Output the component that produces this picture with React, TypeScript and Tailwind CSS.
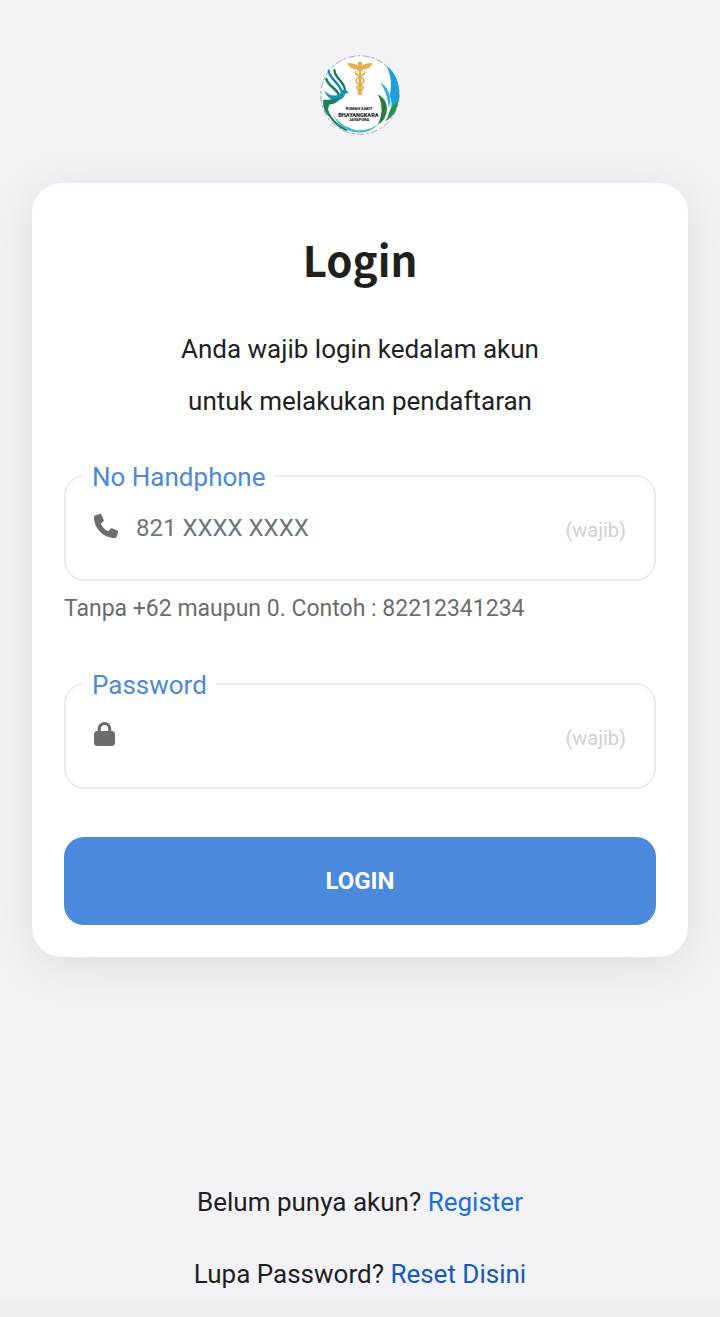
import type { ReactNode } from "react";
import { FaLock, FaPhone } from "react-icons/fa6";

function Logo() {
  return (
    <svg viewBox="0 0 100 100" className="size-20" role="img" aria-label="Rumah Sakit Bhayangkara Jayapura">
      <circle cx="50" cy="50" r="49" fill="#fff" stroke="#8b9194" strokeWidth="1" strokeDasharray="9 2 4 3" />

      {/* bottom ring */}
      <path d="M8 62c3 14 13 26 27 31l-2 2C18 89 8 77 8 62z" fill="#15824f" />
      <path d="M17 76c8 10 19 17 32 18 10 0 18-3 24-8-6 8-14 11-24 11-14 0-26-8-32-21z" fill="#4cb8cf" />

      {/* bird */}
      <g fill="none" strokeLinecap="round">
        <path d="M11 20c0 9 14 15 16 26" stroke="#1788b5" strokeWidth="3" />
        <path d="M18 19c0 9 12 14 13 24" stroke="#14805a" strokeWidth="3" />
        <path d="M8 30c1 8 12 11 15 19" stroke="#0f7f6b" strokeWidth="3" />
      </g>
      <path d="M5 44c7 8 17 9 22 2 2-4 6-4 9 2-4-1-5 1-6 4-5 8-19 7-25-8z" fill="#1d91b7" />
      <path d="M4 56c8 0 14-1 21-3-2 6-7 8-13 9-3 5-2 11 1 17C6 72 3 65 4 56z" fill="#14875a" />

      {/* leaves */}
      <path d="M83 13c12 9 17 24 16 39-1 9-5 14-11 19 2-8 2-14-1-20 3-13 2-26-4-38z" fill="#1c9fdb" />
      <path d="M75 34c9 5 13 14 13 25l-2 8c-1-12-4-23-11-33z" fill="#3aaee0" />
      <path d="M98 56c-3 6-9 8-11 14-2 6-2 9-6 13 10-4 16-15 17-27z" fill="#27924f" />
      <path d="M72 49c11 5 15 17 9 29-2 4-5 7-9 9 5-9 8-24 0-38z" fill="#2a7d3c" />

      {/* caduceus */}
      <g fill="#e5ad4c">
        <path d="M34 10c6 0 11 1 15 4h2c4-3 9-4 15-4-2 5-7 8-12 8l-3 3h-2l-3-3c-5 0-10-3-12-8z" />
        <circle cx="50" cy="11" r="3" />
        <path d="M49 12h2l1 37-2 2-2-2z" />
      </g>
      <path
        d="M45 20c-4 5 10 7 10 12s-9 5-9 9 7 4 6 8M55 20c4 5-10 7-10 12s9 5 9 9-7 4-6 8"
        fill="none"
        stroke="#e5ad4c"
        strokeWidth="2"
      />

      <g fill="#222" textAnchor="middle" fontFamily="Roboto, sans-serif" fontWeight="900">
        <text x="49" y="69" fontSize="5">RUMAH SAKIT</text>
        <text x="48" y="77" fontSize="7">BHAYANGKARA</text>
        <text x="49" y="83" fontSize="5">JAYAPURA</text>
      </g>
    </svg>
  );
}

type FieldProps = {
  id: string;
  label: string;
  type: string;
  placeholder?: string;
  icon: ReactNode;
};

function Field({ id, label, type, placeholder, icon }: FieldProps) {
  return (
    <div className="relative flex items-center h-[106px] px-7 rounded-[20px] border-2 border-[#ebebeb]">
      <label
        htmlFor={id}
        className="absolute -top-[18px] left-4 px-2.5 bg-white text-[26px] leading-9 text-[#4a89dc]"
      >
        {label}
      </label>
      <div className="text-[#6c6c6c] mr-[18px] mb-1">{icon}</div>
      <input
        id={id}
        type={type}
        placeholder={placeholder}
        required
        className="flex-1 min-w-0 h-full text-2xl text-[#6c757d] placeholder:text-[#6c757d] outline-none"
      />
      <em className="mt-1 not-italic text-xl text-[#d0d0d0]">(wajib)</em>
    </div>
  );
}

export default function App() {
  return (
    <div className="min-h-screen flex flex-col bg-[#f2f2f7] font-[Roboto,sans-serif] text-[#1f1f1f]">
      <div className="flex justify-center pt-[55px] pb-12">
        <Logo />
      </div>

      <div className="mx-8 px-8 pt-11 pb-8 rounded-[30px] bg-white shadow-[0_8px_48px_rgba(0,0,0,0.09)]">
        <h1 className="text-center text-[42px] leading-[64px] font-bold font-['Noto_Sans_CJK_SC',sans-serif]">
          Login
        </h1>
        <p className="mt-8 text-center text-[26px] leading-[52px]">
          Anda wajib login kedalam akun
          <br />
          untuk melakukan pendaftaran
        </p>

        <form className="mt-12" onSubmit={(e) => e.preventDefault()}>
          <Field
            id="phone"
            label="No Handphone"
            type="tel"
            placeholder="821 XXXX XXXX"
            icon={<FaPhone className="size-6" />}
          />
          <p className="mt-2 mb-[54px] text-[23px] leading-10 text-[#6c6c6c]">
            Tanpa +62 maupun 0. Contoh : 82212341234
          </p>
          <Field id="password" label="Password" type="password" icon={<FaLock className="h-6 w-[21px]" />} />
          <button
            type="submit"
            className="mt-12 w-full h-[88px] rounded-[20px] bg-[#4a89dc] text-white text-2xl font-bold cursor-pointer"
          >
            LOGIN
          </button>
        </form>
      </div>

      <div className="mt-auto pt-16 text-center text-[26px] leading-[52px]">
        <p>
          Belum punya akun? <a href="#" className="text-[#1a70e0]">Register</a>
        </p>
        <p className="mt-5">
          Lupa Password? <a href="#" className="text-[#1559b8]">Reset Disini</a>
        </p>
      </div>
      <div className="h-[17px] bg-[#f0f0f0]" />
    </div>
  );
}
